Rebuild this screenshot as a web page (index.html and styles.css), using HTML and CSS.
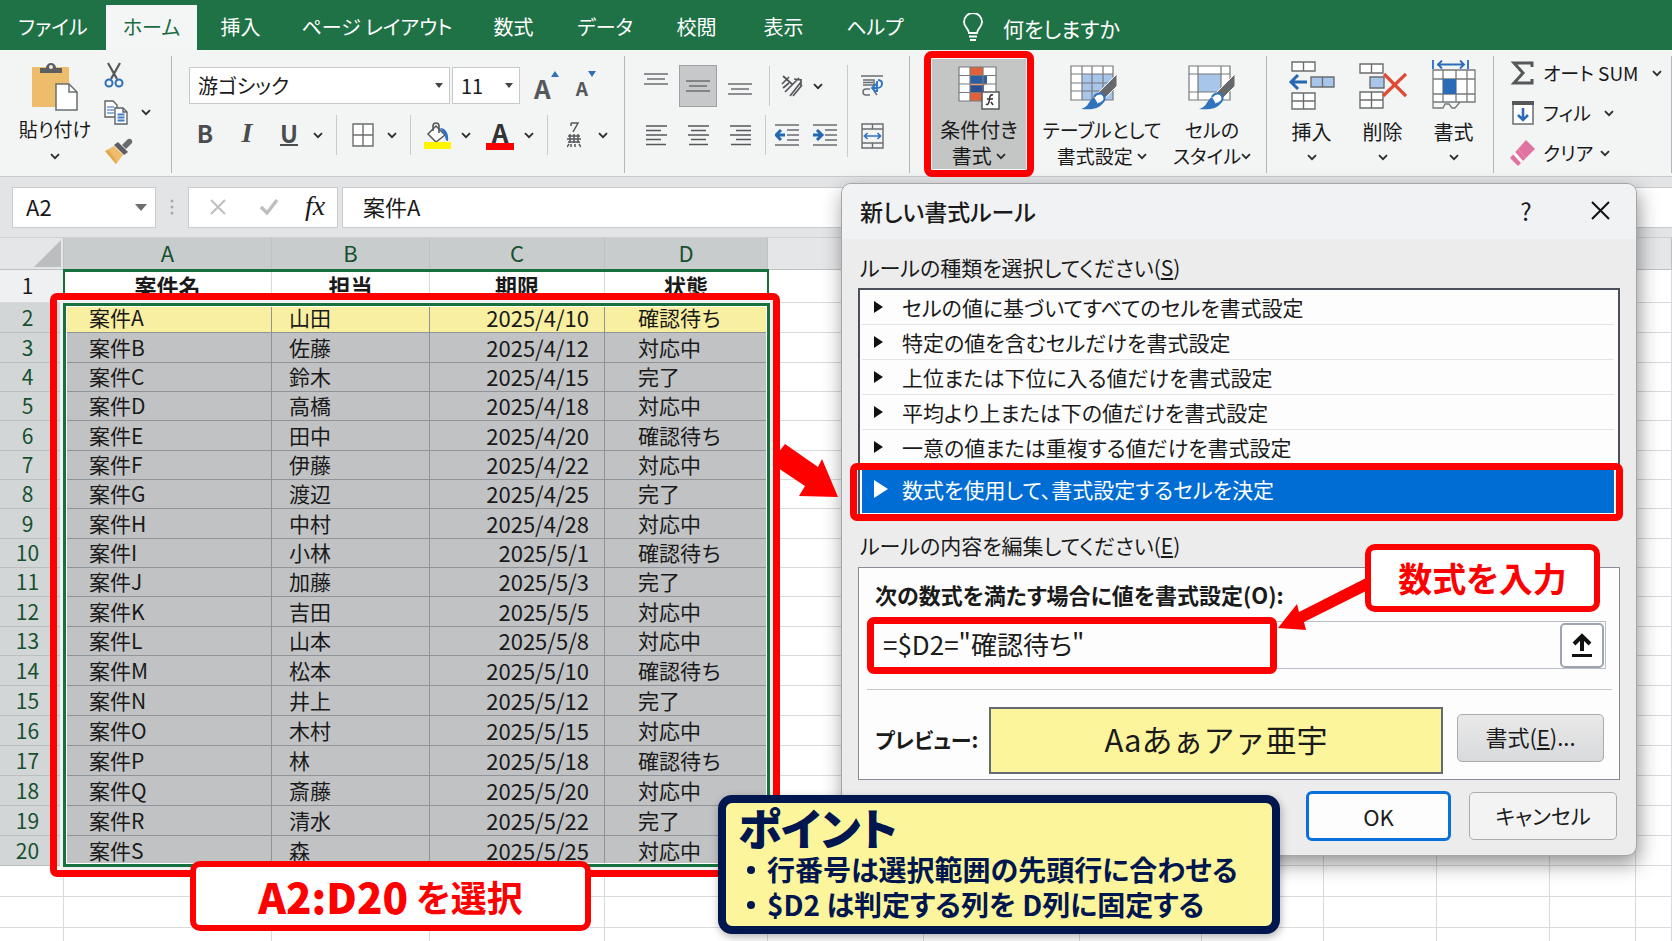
FILE: index.html
```html
<!DOCTYPE html>
<html lang="ja">
<head>
<meta charset="utf-8">
<title>新しい書式ルール</title>
<link rel="stylesheet" href="styles.css">
</head>
<body>
<svg class="defs" aria-hidden="true">
  <symbol id="chev" viewBox="0 0 10 7"><path d="M1 1.200l4 4 4-4" fill="none" stroke="#2b2b2b" stroke-width="1.800"/></symbol>
</svg>
<div class="app">
  <nav class="tabs">
    <a class="tab file" href="#file">ファイル</a>
    <a class="tab active" href="#home">ホーム</a>
    <a class="tab" href="#insert">挿入</a>
    <a class="tab long" href="#layout">ページ レイアウト</a>
    <a class="tab" href="#formula">数式</a>
    <a class="tab mid" href="#data">データ</a>
    <a class="tab" href="#review">校閲</a>
    <a class="tab" href="#view">表示</a>
    <a class="tab mid" href="#help">ヘルプ</a>
    <a class="tell" href="#tell">
      <svg width="20" height="29" viewBox="0 0 20 29" fill="none" stroke="#fff" stroke-width="1.800"><path d="M6 20c0-4-5-6-5-11a9 9 0 0 1 18 0c0 5-5 7-5 11z"/><path d="M6 23.500h8M7 27h6"/></svg>
      何をしますか
    </a>
  </nav>

  <section class="ribbon">
    <div class="group clip">
      <button class="big paste">
        <svg width="46" height="49" viewBox="0 0 46 49"><rect x="0" y="5" width="37" height="40" rx="1" fill="#edbd6c"/><path d="M8 11V6h6a5 5 0 0 1 10 0h6v5z" fill="#5c5e60"/><circle cx="19" cy="5" r="2" fill="#eee"/><path d="M24 22h13l8 8v18H24z" fill="#fff" stroke="#6b6d70" stroke-width="1.500"/><path d="M37 22v8h8" fill="none" stroke="#6b6d70" stroke-width="1.500"/></svg>
        <span>貼り付け</span>
        <svg class="chev"><use href="#chev"/></svg>
      </button>
      <div class="clip-col">
        <button class="ico" aria-label="切り取り"><svg width="20" height="26" viewBox="0 0 20 26" fill="none"><path d="M4 1l9 16M16 1L7 17" stroke="#55585b" stroke-width="2.200"/><circle cx="5" cy="21" r="3.500" stroke="#2f6fb8" stroke-width="2"/><circle cx="15" cy="21" r="3.500" stroke="#2f6fb8" stroke-width="2"/></svg></button>
        <div class="split">
          <button class="ico" aria-label="コピー"><svg width="24" height="25" viewBox="0 0 24 25" stroke="#5f6266" stroke-width="1.400"><path d="M1 1h8l4 4v12H1z" fill="#fff"/><path d="M3 7h7M3 10h7M3 13h7" stroke="#6c9bd2"/><path d="M11 8h8l4 4v12H11z" fill="#fff"/><path d="M19 8v4h4" fill="none"/><path d="M13.500 14.500h7M13.500 17.500h7M13.500 20.500h7" stroke="#3f7ec4" stroke-width="1.800"/></svg></button>
          <button class="drop" aria-label="コピーのオプション"><svg class="chev"><use href="#chev"/></svg></button>
        </div>
        <button class="ico" aria-label="書式のコピー"><svg width="30" height="28" viewBox="0 0 30 28"><path d="M1 14l9-5 9 9-7 9z" fill="#edbd6c"/><path d="M1 14l4-1 8 12-1 2z" fill="#e3a94e"/><path d="M10 8l4-3 10 10-4 3z" fill="#5c5e60"/><path d="M18 8l6-6a3 3 0 0 1 4 4l-6 6z" fill="#6a6c6f"/></svg></button>
      </div>
    </div>

    <div class="group font">
      <div class="row top">
        <label class="combo face"><select aria-label="フォント"><option>游ゴシック</option></select></label>
        <label class="combo size"><select aria-label="フォント サイズ"><option>11</option></select></label>
        <button class="ico grow" aria-label="フォント サイズの拡大"><b>A</b><svg width="8" height="6" viewBox="0 0 8 6"><path d="M0 6l4-6 4 6z" fill="#2f6fb8"/></svg></button>
        <button class="ico shrink" aria-label="フォント サイズの縮小"><b>A</b><svg width="8" height="6" viewBox="0 0 8 6"><path d="M0 0l4 6 4-6z" fill="#2f6fb8"/></svg></button>
      </div>
      <div class="row bottom">
        <button class="ltr b">B</button><button class="ltr i">I</button><button class="ltr u"><span>U</span></button>
        <button class="drop" aria-label="下線の種類"><svg class="chev"><use href="#chev"/></svg></button>
        <i class="sep"></i>
        <div class="split">
          <button class="ico w32" aria-label="罫線"><svg width="22" height="24" viewBox="0 0 22 24"><path d="M1 1h20v22H1zM11 1v22M1 12h20" fill="#fff" stroke="#6b6d70" stroke-width="1.400"/></svg></button>
          <button class="drop" aria-label="罫線の種類"><svg class="chev"><use href="#chev"/></svg></button>
        </div>
        <i class="sep"></i>
        <div class="split">
          <button class="ico w32" aria-label="塗りつぶしの色"><svg width="27" height="27" viewBox="0 0 27 27"><path d="M12 4l9 9-9 7-8-8z" fill="#fff" stroke="#55585b" stroke-width="1.500"/><path d="M9 9V4a3 3 0 0 1 6 0v7" fill="none" stroke="#55585b" stroke-width="1.600"/><path d="M16 6c6 0 9 6 8 13-2 0-3-2-3-6z" fill="#2f74c4"/><rect y="20" width="27" height="7" fill="#fff500"/></svg></button>
          <button class="drop" aria-label="塗りつぶしの色の選択"><svg class="chev"><use href="#chev"/></svg></button>
        </div>
        <div class="split next">
          <button class="ico w32 color" aria-label="フォントの色"><b>A</b><i></i></button>
          <button class="drop" aria-label="フォントの色の選択"><svg class="chev"><use href="#chev"/></svg></button>
        </div>
        <i class="sep"></i>
        <div class="split">
          <button class="ico w32" aria-label="ふりがな"><svg width="14" height="26" viewBox="0 0 14 26" fill="none" stroke="#55585b" stroke-width="1.500"><path d="M4 1h7L6 10M4 1v3"/><path d="M1 14h12M0 17h14M1 20h12M0 25l2-3M4 22v3M8 22v3M12 22l2 3M3 12v9M7 12v9M11 12v9"/></svg></button>
          <button class="drop" aria-label="ふりがなのオプション"><svg class="chev"><use href="#chev"/></svg></button>
        </div>
      </div>
    </div>

    <div class="group align">
      <div class="align-main">
        <div class="row top">
          <button class="ico al" aria-label="上揃え"><svg class="up" width="24" height="12" viewBox="0 0 24 12"><path d="M0 1h24M3 6h18M0 11h24" stroke="#6b6d70" stroke-width="1.600"/></svg></button>
          <button class="ico al on" aria-label="上下中央揃え"><svg width="24" height="12" viewBox="0 0 24 12"><path d="M0 1h24M3 6h18M0 11h24" stroke="#6b6d70" stroke-width="1.600"/></svg></button>
          <button class="ico al" aria-label="下揃え"><svg class="down" width="24" height="12" viewBox="0 0 24 12"><path d="M0 1h24M3 6h18M0 11h24" stroke="#6b6d70" stroke-width="1.600"/></svg></button>
          <i class="sep tight"></i>
          <button class="ico w32" aria-label="方向"><svg width="22" height="24" viewBox="0 0 22 24" fill="none" stroke="#55585b" stroke-width="1.700"><path d="M2 2l10 9M1 10l7-7M2 14l6-5M4 18l14-14M9 22L20 8M12 22l9-11M20 5v7M13 5l7 1"/></svg></button>
          <button class="drop" aria-label="方向の選択"><svg class="chev"><use href="#chev"/></svg></button>
        </div>
        <div class="row bottom">
          <button class="ico al" aria-label="左揃え"><svg width="21" height="21" viewBox="0 0 21 21"><path d="M0 1h21M0 5.500h15M0 10h21M0 14.500h15M0 19.500h20" stroke="#55585b" stroke-width="1.600"/></svg></button>
          <button class="ico al" aria-label="中央揃え"><svg width="21" height="21" viewBox="0 0 21 21"><path d="M0 1h21M3 5.500h15M0 10h21M3 14.500h15M1 19.500h19" stroke="#55585b" stroke-width="1.600"/></svg></button>
          <button class="ico al" aria-label="右揃え"><svg width="21" height="21" viewBox="0 0 21 21"><path d="M0 1h21M6 5.500h15M0 10h21M6 14.500h15M1 19.500h20" stroke="#55585b" stroke-width="1.600"/></svg></button>
          <i class="sep tight"></i>
          <button class="ico al" aria-label="インデントを減らす"><svg width="24" height="22" viewBox="0 0 24 22"><path d="M0 1h24M12 6h12M12 11h12M12 16h12M0 21h24" stroke="#6b6d70" stroke-width="1.500"/><path d="M10 11H2M6 6l-5 5 5 5" fill="none" stroke="#2467b3" stroke-width="3"/></svg></button>
          <button class="ico al" aria-label="インデントを増やす"><svg width="24" height="22" viewBox="0 0 24 22"><path d="M0 1h24M12 6h12M12 11h12M12 16h12M0 21h24" stroke="#6b6d70" stroke-width="1.500"/><path d="M0 11h8M4 6l5 5-5 5" fill="none" stroke="#2467b3" stroke-width="3"/></svg></button>
        </div>
      </div>
      <div class="align-side">
        <button class="ico al" aria-label="折り返して全体を表示する"><svg width="23" height="22" viewBox="0 0 23 22" fill="none" stroke="#6b6d70" stroke-width="1.500"><path d="M0 1h22M2 5h11v5H2M2 7.500h10M9 14H5a3 3 0 0 0 0 6h4M13 16l3 4"/><path d="M17 5c6 0 5 8-1 8h-4M15 9l-4 4 4 4M16 6v11" stroke="#2f74c4" stroke-width="1.900"/></svg></button>
        <button class="ico al" aria-label="セルを結合して中央揃え"><svg width="23" height="26" viewBox="0 0 23 26" fill="none" stroke="#6b6d70" stroke-width="1.400"><path d="M1 1h21v24H1zM1 6h21M1 20h21M11.500 1v5M11.500 20v5"/><path d="M4 13h15M6.500 10l-3 3 3 3M16.500 10l3 3-3 3" stroke="#2f74c4" stroke-width="1.700"/></svg></button>
      </div>
    </div>

    <div class="group styles">
      <button class="big hot">
        <svg width="42" height="44" viewBox="0 0 42 44"><rect x="1" y="1" width="37" height="34" fill="#fff"/><rect x="12" y="1" width="13" height="34" fill="#e0623c"/><rect x="12" y="10" width="17" height="8" fill="#2c5f9f"/><rect x="12" y="19" width="14" height="7" fill="#2c4f8f"/><path d="M12 18.500h16" stroke="#f0a070" stroke-width="1.500"/><path d="M1 1h37v34H1zM12 1v34M25 1v34M1 9.500h37M1 18h11M25 18h13M1 26.500h37" fill="none" stroke="#77797c" stroke-width="1.200"/><rect x="24" y="26" width="17" height="17" fill="#fff" stroke="#55585b" stroke-width="1.500"/><path d="M35 29c-4-1-3 4-4 7s-2 3-3 2M29 33h6M33 36l2 3" fill="none" stroke="#333" stroke-width="1.500"/></svg>
        <span>条件付き<br>書式 <svg class="chev"><use href="#chev"/></svg></span>
      </button>
      <button class="big wide">
        <svg width="64" height="46" viewBox="0 0 64 46"><rect x="1" y="2" width="42" height="34" fill="#fff"/><rect x="12" y="10" width="31" height="26" fill="#a8c6ea"/><path d="M1 2h42v34H1zM12 2v34M22 2v34M33 2v34M1 10h42M1 19h42M1 27h42" fill="none" stroke="#77797c" stroke-width="1.200"/><path d="M47 10v12L35 34l-7-5z" fill="#66686b" stroke="#f3f3f3"/><path d="M11 45c8-2 7-8 13-12l9 6c-4 6-12 7-22 6z" fill="#3173bd"/><path d="M24 33c2-4 8-5 10-1s-2 8-6 8" fill="#fff" stroke="#3173bd" stroke-width="2"/></svg>
        <span>テーブルとして<br>書式設定 <svg class="chev"><use href="#chev"/></svg></span>
      </button>
      <button class="big">
        <svg width="48" height="46" viewBox="0 0 48 46"><rect x="1" y="2" width="41" height="34" fill="#fff"/><rect x="10" y="10" width="23" height="18" fill="#a8c6ea"/><path d="M1 2h41v34H1zM10 2v34M33 2v34M1 10h41M1 28h41" fill="none" stroke="#77797c" stroke-width="1.200"/><path d="M47 10v12L35 34l-7-5z" fill="#66686b" stroke="#f3f3f3"/><path d="M11 45c8-2 7-8 13-12l9 6c-4 6-12 7-22 6z" fill="#3173bd"/><path d="M24 33c2-4 8-5 10-1s-2 8-6 8" fill="#fff" stroke="#3173bd" stroke-width="2"/></svg>
        <span>セルの<br>スタイル<svg class="chev"><use href="#chev"/></svg></span>
      </button>
    </div>

    <div class="group cells">
      <button class="big">
        <svg width="48" height="50" viewBox="0 0 48 50"><g fill="#fff" stroke="#6b6d70" stroke-width="1.400"><path d="M4 2h23v9H4zM15.500 2v9M4 33h23v16H4zM15.500 33v16M4 41h23"/><path d="M23 17h23v10H23zM34.500 17v10" fill="#a8c6ea"/></g><path d="M19 22H3M10 15l-7 7 7 7" fill="none" stroke="#2467b3" stroke-width="3"/></svg>
        <span>挿入</span><svg class="chev"><use href="#chev"/></svg>
      </button>
      <button class="big">
        <svg width="48" height="50" viewBox="0 0 48 50"><g fill="#fff" stroke="#6b6d70" stroke-width="1.400"><path d="M1 4h23v9H1zM12.500 4v9M1 32h23v16H1zM12.500 32v16M1 40h23"/><path d="M11 17h14v11H11z" fill="#a8c6ea"/></g><path d="M25 14l22 22" stroke="#e04a32" stroke-width="3.200"/><path d="M47 14L24 36" stroke="#e04a32" stroke-width="3.200"/></svg>
        <span>削除</span><svg class="chev"><use href="#chev"/></svg>
      </button>
      <button class="big">
        <svg width="44" height="50" viewBox="0 0 44 50"><path d="M1 10h42v32H1z" fill="#fff"/><path d="M1 10h42v32H1zM11 10v32M24 10v32M35 10v32M1 19h42M1 34h42M1 42v6h10l2-4h4l3 4h3l5-6" fill="none" stroke="#77797c" stroke-width="1.300"/><rect x="11" y="19" width="13" height="15" fill="#2b6cb8"/><path d="M1 0v9M36 0v9M5 4.500h27M10 .500l-4 4 4 4M28 .500l4 4-4 4" fill="none" stroke="#2b6cb8" stroke-width="1.800"/></svg>
        <span>書式</span><svg class="chev"><use href="#chev"/></svg>
      </button>
    </div>

    <div class="group edit">
      <button class="line"><svg width="26" height="24" viewBox="0 0 26 24"><path d="M22 6V2H4l9 10-9 10h18v-4" fill="none" stroke="#55585b" stroke-width="3"/></svg>オート SUM<svg class="chev far"><use href="#chev"/></svg></button>
      <button class="line"><svg width="26" height="24" viewBox="0 0 26 24"><path d="M3 1h20v22H3z" fill="#fff" stroke="#6b6d70" stroke-width="1.500"/><path d="M2 0h22v4H2z" fill="#55585b"/><path d="M13 7v12M8 14l5 5 5-5" fill="none" stroke="#2b6cb8" stroke-width="2.600"/></svg>フィル<svg class="chev far"><use href="#chev"/></svg></button>
      <button class="line"><svg width="26" height="26" viewBox="0 0 26 26"><path d="M16 0l9 9-9 9-8-9z" fill="#e0739f"/><path d="M8 9l8 9-8 8-8-8z" fill="#e0739f"/><path d="M4 13l8 9" stroke="#fff" stroke-width="3"/></svg>クリア<svg class="chev"><use href="#chev"/></svg></button>
    </div>
  </section>

  <section class="fbar">
    <div class="namebox"><input type="text" value="A2" aria-label="名前ボックス"><button class="tri" aria-label="名前の一覧"></button></div>
    <svg class="dots" width="4" height="16" viewBox="0 0 4 16"><g fill="#a9a9ab"><circle cx="2" cy="2" r="1.500"/><circle cx="2" cy="8" r="1.500"/><circle cx="2" cy="14" r="1.500"/></g></svg>
    <div class="fx">
      <button aria-label="キャンセル"><svg width="18" height="18" viewBox="0 0 18 18"><path d="M2 2l14 14M16 2L2 16" stroke="#bdbec0" stroke-width="2"/></svg></button>
      <button aria-label="入力"><svg width="20" height="18" viewBox="0 0 20 18"><path d="M2 9l6 6L18 2" fill="none" stroke="#bdbec0" stroke-width="3.400"/></svg></button>
      <button class="fn" aria-label="関数の挿入">fx</button>
    </div>
    <input class="formula" type="text" value="案件A" aria-label="数式バー">
  </section>

  <main class="sheet">
    <table>
      <colgroup><col class="ch"><col class="ca"><col class="cb"><col class="cc"><col class="cd"><col class="ce"><col class="ce"><col class="cf"><col class="cf"><col class="cg"><col class="cg"><col class="ci"><col></colgroup>
      <thead><tr><th class="corner"><svg width="27" height="27" viewBox="0 0 27 27"><path d="M27 0v27H0z" fill="#bcbdbf"/></svg></th><th class="s">A</th><th class="s">B</th><th class="s">C</th><th class="s">D</th><th colspan="8"></th></tr></thead>
      <tbody id="rows"></tbody>
    </table>
    <div class="head-frame"></div>
    <div class="sel-frame"></div>
    <div class="red-frame"></div>
  </main>

  <svg class="arrow-a" width="60" height="56" viewBox="0 0 60 56"><path d="M7 1l33 23 4-8 16 38-39-1 6-10L0 25V10z" fill="#fe0000"/></svg>

  <section class="dialog" role="dialog" aria-labelledby="dlg-title">
    <header class="dlg-head">
      <h2 id="dlg-title">新しい書式ルール</h2>
      <button class="help" aria-label="ヘルプ">?</button>
      <button class="close" aria-label="閉じる"><svg width="19" height="19" viewBox="0 0 19 19"><path d="M1 1l17 17M18 1L1 18" stroke="#111" stroke-width="2"/></svg></button>
    </header>
    <div class="dlg-body">
      <p class="lbl" id="kind">ルールの種類を選択してください(<u>S</u>)</p>
      <div class="list-wrap">
        <ul class="list" role="listbox" aria-labelledby="kind">
          <li role="option">セルの値に基づいてすべてのセルを書式設定</li>
          <li role="option">特定の値を含むセルだけを書式設定</li>
          <li role="option">上位または下位に入る値だけを書式設定</li>
          <li role="option">平均より上または下の値だけを書式設定</li>
          <li role="option">一意の値または重複する値だけを書式設定</li>
          <li role="option" class="picked" aria-selected="true">数式を使用して、書式設定するセルを決定</li>
        </ul>
        <div class="pick-frame"></div>
      </div>
      <p class="lbl">ルールの内容を編集してください(<u>E</u>)</p>
      <div class="box">
        <label class="strong" for="expr">次の数式を満たす場合に値を書式設定(O):</label>
        <div class="expr">
          <input id="expr" type="text" value='=$D2="確認待ち"'>
          <button aria-label="ダイアログを折りたたむ"><svg width="20" height="24" viewBox="0 0 20 24"><path d="M10 18V4M2 11l8-8 8 8" fill="none" stroke="#111" stroke-width="4"/><path d="M0 22.500h20" stroke="#111" stroke-width="3"/></svg></button>
          <div class="expr-frame"></div>
        </div>
        <hr>
        <div class="preview">
          <span class="strong">プレビュー:</span>
          <output>Aaあぁアァ亜宇</output>
          <button class="fmt">書式(<u>E</u>)...</button>
        </div>
      </div>
      <footer><button class="ok">OK</button><button class="cancel">キャンセル</button></footer>
    </div>
    <svg class="arrow-b" width="92" height="56" viewBox="0 0 92 56"><path d="M0 52l19-24 2 8L92 0v13L26 46l2 8z" fill="#fe0000"/></svg>
    <div class="tag tag-b">数式を入力</div>
  </section>

  <div class="tag tag-a"><b>A2:D20</b> を選択</div>

  <aside class="note">
    <h3>ポイント</h3>
    <ul>
      <li>行番号は選択範囲の先頭行に合わせる</li>
      <li>$D2 は判定する列を D列に固定する</li>
    </ul>
  </aside>
</div>
<script src="sheet.js"></script>
</body>
</html>
```
FILE: sheet.js
```js
const data = [
  ["案件A", "山田", "2025/4/10", "確認待ち"],
  ["案件B", "佐藤", "2025/4/12", "対応中"],
  ["案件C", "鈴木", "2025/4/15", "完了"],
  ["案件D", "高橋", "2025/4/18", "対応中"],
  ["案件E", "田中", "2025/4/20", "確認待ち"],
  ["案件F", "伊藤", "2025/4/22", "対応中"],
  ["案件G", "渡辺", "2025/4/25", "完了"],
  ["案件H", "中村", "2025/4/28", "対応中"],
  ["案件I", "小林", "2025/5/1", "確認待ち"],
  ["案件J", "加藤", "2025/5/3", "完了"],
  ["案件K", "吉田", "2025/5/5", "対応中"],
  ["案件L", "山本", "2025/5/8", "対応中"],
  ["案件M", "松本", "2025/5/10", "確認待ち"],
  ["案件N", "井上", "2025/5/12", "完了"],
  ["案件O", "木村", "2025/5/15", "対応中"],
  ["案件P", "林", "2025/5/18", "確認待ち"],
  ["案件Q", "斎藤", "2025/5/20", "対応中"],
  ["案件R", "清水", "2025/5/22", "完了"],
  ["案件S", "森", "2025/5/25", "対応中"]
];
const body = document.getElementById("rows");
const blanks = "<td></td>".repeat(8);
const row = (cls, head, cells) => {
  const tr = document.createElement("tr");
  tr.className = cls;
  tr.innerHTML = `<th scope="row">${head}</th>` + cells.map(c => `<td>${c}</td>`).join("") + blanks;
  body.append(tr);
};
row("titles", 1, ["案件名", "担当", "期限", "状態"]);
data.forEach((r, i) => row(i ? "sel" : "sel hit", i + 2, r));
for (let i = 0; i < 3; i++) row("empty", "", ["", "", "", ""]);
```
FILE: styles.css
```css
* { box-sizing: border-box; }
body, p, h2, h3, ul { margin: 0; padding: 0; }
body {
  font-family: "Noto Sans CJK JP", "Noto Sans", sans-serif;
  font-size: 20px;
  line-height: 26px;
  color: #1a1a1a;
  overflow: hidden;
}
button, input, select { font: inherit; color: inherit; border: 0; background: none; padding: 0; margin: 0; border-radius: 0; }
ul { list-style: none; }
svg { display: block; flex: none; }
.defs { position: absolute; width: 0; height: 0; }
.chev { width: 10px; height: 7px; }

.app { position: relative; height: 100vh; display: flex; flex-direction: column; overflow: hidden; background: #fff; }

/* tab strip */
.tabs { display: flex; align-items: stretch; height: 50px; padding-top: 5px; background: #1f7246; font-feature-settings: "palt"; flex: none; white-space: nowrap; }
.tab { width: 87px; line-height: 43px; color: #fff; text-align: center; text-decoration: none; font-size: 20px; }
.tab.file { width: 106px; }
.tab.mid { width: 96px; }
.tab.long { width: 186px; }
.tab.active { width: 91px; background: #f4f5f5; color: #1b6b42; }
.tell { display: flex; align-items: center; gap: 20px; margin-left: 40px; color: #fff; text-decoration: none; font-size: 21px; }

/* ribbon */
.ribbon { display: flex; height: 127px; flex: none; padding: 6px 0 3px; background: #f3f4f4; border-bottom: 1px solid #c9cacc; font-feature-settings: "palt"; }
.group { border-right: 1px solid #b4b6b8; }
.row { display: flex; align-items: center; }
.ico, .drop { display: flex; align-items: center; justify-content: center; }
.drop { width: 16px; height: 32px; }
.w32 { width: 32px; height: 32px; }
.split { display: flex; align-items: center; gap: 5px; }
.sep { width: 1px; height: 40px; margin: 0 10px; background: #c8cacc; }
.sep.tight { margin: 0 6px; }
.big { display: flex; flex-direction: column; align-items: center; white-space: nowrap; }
.big span { line-height: 26px; text-align: center; }
.big span .chev { display: inline-block; vertical-align: 4px; }

.clip { display: flex; width: 172px; padding: 6px 0 0 18px; gap: 12px; }
.paste { width: 74px; gap: 5px; font-size: 19px; }
.paste .chev { margin-top: 6px; }
.clip-col { display: flex; flex-direction: column; align-items: flex-start; gap: 12px; }
.clip-col .drop { height: 24px; }
.clip-col .split { gap: 10px; }

.font { width: 453px; padding: 11px 0 0 12px; }
.font .top { height: 37px; padding-left: 5px; }
.font .bottom { height: 40px; margin-top: 11px; }
.combo { position: relative; display: flex; height: 37px; background: #fff; border: 1px solid #c6c8ca; }
.combo select { width: 100%; appearance: none; padding-left: 8px; }
.combo::after { content: ""; position: absolute; right: 6px; top: 15px; border: 4px solid transparent; border-top: 5px solid #444; pointer-events: none; }
.face { width: 261px; }
.size { width: 68px; margin-left: 2px; }
.grow, .shrink { align-items: flex-start; color: #55585b; }
.grow { margin-left: 14px; font-size: 26px; }
.shrink { margin-left: 17px; font-size: 19px; }
.grow b, .shrink b { padding-top: 4px; }
.ltr { width: 42px; height: 36px; padding-bottom: 4px; font-size: 24px; color: #4a4c4f; font-weight: bold; }
.ltr.i { font-family: "Liberation Serif", serif; font-style: italic; font-size: 28px; }
.ltr.u span { display: inline-block; line-height: 22px; border-bottom: 2px solid #4a4c4f; }
.color { flex-direction: column; color: #333; }
.color b { font-size: 26px; line-height: 23px; }
.color i { width: 28px; height: 7px; background: #fe0000; }
.next { margin-left: 10px; }

.align { display: flex; width: 285px; padding: 9px 0 0 12px; }
.align-main { width: 210px; }
.al { width: 38px; height: 42px; margin-right: 4px; }
.al.on { background: #c6c8c9; border: 1px solid #9fa1a3; }
.align-main .bottom { height: 40px; margin-top: 8px; }
.align-main .bottom .sep + .al, .align-main .bottom .al:last-child { margin-right: 0; }
.align-main .bottom .sep { margin: 0 2px; }
.align .drop { width: 20px; }
.up { margin-bottom: 14px; }
.down { margin-top: 6px; }
.align-side { height: 92px; padding-left: 5px; border-left: 1px solid #c8cacc; display: flex; flex-direction: column; gap: 8px; }
.align-side .al { margin: 0; }

.styles { display: flex; width: 357px; padding: 0 0 0 14px; gap: 5px; }
.styles .big { width: 84px; padding-top: 8px; gap: 7px; font-size: 19px; }
.styles .big.wide { width: 126px; }
.styles .big.hot { width: 110px; height: 126px; margin-top: -5px; padding-top: 8px; background: #c4c6c6; border: 7px solid #fe0000; border-radius: 8px; box-shadow: inset 0 0 0 1px #fff; font-size: 20px; }
.cells { display: flex; width: 227px; padding: 4px 0 0 9px; }
.cells .big { width: 71px; gap: 9px; }
.edit { flex: 1; display: flex; flex-direction: column; align-items: flex-start; padding: 4px 0 0 16px; gap: 14px; font-size: 19px; }
.line { display: flex; align-items: center; gap: 7px; height: 26px; white-space: nowrap; }
.line .far { margin-left: 6px; }

/* formula bar */
.fbar { display: flex; align-items: center; height: 61px; flex: none; padding-left: 12px; background: #e3e4e6; border-bottom: 1px solid #cfd0d2; font-size: 22px; }
.namebox, .fx, .formula { height: 41px; background: #fff; border: 1px solid #c9cbcd; }
.namebox { display: flex; align-items: center; width: 144px; }
.namebox input { flex: 1; min-width: 0; padding: 0 0 3px 13px; }
.tri { width: 28px; height: 30px; display: grid; place-items: center; }
.tri::before { content: ""; border: 6px solid transparent; border-top: 7px solid #6b6d70; border-bottom: 0; }
.dots { margin: 0 14px; }
.fx { display: flex; align-items: center; width: 150px; padding-left: 16px; }
.fx button { width: 50px; height: 36px; display: grid; place-items: center; justify-content: start; padding-left: 4px; }
.fx .fn { font-family: "Liberation Serif", serif; font-style: italic; font-size: 28px; width: 30px; padding: 0 0 3px; }
.formula { flex: 1; min-width: 0; margin-left: 4px; padding: 0 0 3px 20px; border-right: 0; }

/* worksheet */
.sheet { position: relative; }
table { width: 100%; table-layout: fixed; border-collapse: separate; border-spacing: 0; font-size: 21px; line-height: 24px; }
.ch { width: 64px; } .ca { width: 208px; } .cb { width: 158px; } .cc { width: 175px; } .cd { width: 163px; }
.ce { width: 156px; } .cf { width: 122px; } .cg { width: 113px; } .ci { width: 86px; }
th, td { padding: 0 0 2px; border: 0 solid #d9dadc; border-width: 0 1px 1px 0; text-align: left; font-weight: normal; white-space: nowrap; height: 30px; }
thead th { height: 32px; padding-bottom: 4px; background: #e5e6e8; border-color: #bfc1c3; text-align: center; font-size: 22px; }
thead .corner { padding: 0; }
thead .s { background: #c9cccd; color: #17502f; }
.corner svg { margin: 0 2px 0 auto; }
tbody th { text-align: center; padding-right: 8px; background: #eff0f1; }
.titles td { height: 33px; text-align: center; font-weight: bold; font-size: 22px; }
.sel th { background: #d2d6d6; color: #17502f; border-color: #b9bfbe; }
tbody tr:nth-child(-n+13):not(:nth-child(3n)):not(.titles):not(.hit) > * { height: 29px; }
.sel td:nth-child(-n+5) { background: #c1c2c4; border-color: #909397; }
.hit td:nth-child(-n+5) { background: #f9efa0; }
.sel td:nth-child(2) { padding-left: 25px; }
.sel td:nth-child(3) { padding-left: 17px; }
.sel td:nth-child(4) { text-align: right; padding-right: 15px; font-size: 22px; }
.sel td:nth-child(5) { padding-left: 33px; }
.empty > * { height: 31px; }
.empty th { background: #fff; }
.head-frame { position: absolute; left: 63px; top: 31px; width: 706px; height: 34px; border: 2px solid #16713f; border-top-width: 3px; border-bottom: 0; }
.sel-frame { position: absolute; left: 63px; top: 65px; width: 707px; height: 564px; border: 3px solid #16713f; box-shadow: inset 0 0 0 1px #fff, 0 0 0 3px #f1f3f2; }
.red-frame { position: absolute; left: 50px; top: 55px; width: 730px; height: 584px; border: 7px solid #fe0000; border-radius: 7px; }
.arrow-a { position: absolute; left: 778px; top: 443px; z-index: 3; }

/* dialog window */
.dialog { position: absolute; left: 841px; top: 183px; width: 796px; border: 1px solid #a3a5a8; border-radius: 10px; background: #ececed; box-shadow: 2px 8px 20px rgba(0, 0, 0, .42); font-size: 21px; font-feature-settings: "palt"; z-index: 2; }
.dlg-head { display: flex; align-items: center; height: 55px; padding: 0 26px 2px 18px; background: #f1f2f4; border-radius: 9px 9px 0 0; }
.dlg-head h2 { flex: 1; font-size: 23px; font-weight: 500; }
.dlg-head button { display: grid; place-items: center; height: 32px; }
.help { width: 32px; margin-right: 49px; font-size: 24px; }
.dlg-body { padding: 12px 16px 14px; }
.lbl { line-height: 32px; padding-left: 2px; }
.list-wrap { position: relative; margin: 5px 0 12px; }
.list { border: 2px solid #4a4f5a; background: #fdfdfd; padding: 0 4px 2px 2px; }
.list li { display: flex; align-items: center; gap: 18px; height: 35px; padding-left: 12px; border-bottom: 1px solid #e3e4e8; }
.list li::before { content: ""; border: 6px solid transparent; border-left: 9px solid #111; border-right: 0; margin-right: 1px; }
.list .picked { height: 48px; background: #006dd5; color: #fff; border: 0; gap: 14px; }
.list .picked::before { border-width: 9px 0 9px 14px; border-left-color: #fff; margin: 0; }
.pick-frame { position: absolute; left: -8px; right: -3px; bottom: -4px; height: 58px; border: 7px solid #fe0000; border-radius: 7px; }
.box { margin-top: 6px; padding: 10px 7px 5px 8px; background: #fdfdfd; border: 1px solid #868a94; }
.strong { display: block; padding-left: 8px; line-height: 32px; font-weight: bold; font-size: 22px; }
.expr { position: relative; display: flex; align-items: center; height: 48px; margin: 11px 6px 20px 0; padding-right: 1px; background: #fdfdfe; border: 1px solid #b9bdc6; }
.expr input { flex: 1; min-width: 0; padding: 0 0 3px 15px; font-size: 26px; }
.expr button { display: grid; place-items: center; width: 44px; height: 45px; border: 2px solid #9ea4b0; border-radius: 5px; background: #fff; }
.expr-frame { position: absolute; left: -1px; top: -5px; width: 410px; height: 57px; border: 7px solid #fe0000; border-radius: 7px; pointer-events: none; }
hr { margin: 0; border: 0; border-top: 1px solid #c6c8cc; }
.preview { display: flex; align-items: center; margin-top: 17px; padding-right: 8px; }
.preview .strong { width: 122px; flex: none; font-size: 21px; padding-bottom: 4px; }
.preview output { flex: 1; height: 67px; line-height: 60px; border: 2px solid #666a73; background: #fdf59c; text-align: center; font-size: 31px; font-feature-settings: normal; }
.fmt { width: 147px; height: 48px; margin: 0 0 6px 14px; padding-bottom: 4px; border: 1px solid #a9abae; border-radius: 5px; background: linear-gradient(#e9e9ea, #d9dadb); font-size: 22px; }
footer { display: flex; justify-content: flex-end; align-items: center; gap: 18px; margin-top: 11px; padding-right: 3px; }
.ok { width: 145px; height: 50px; border: 3px solid #0a70dc; border-radius: 6px; background: #fdfdfd; font-size: 22px; }
.cancel { width: 148px; height: 48px; padding-bottom: 2px; border: 1px solid #a9abae; border-radius: 5px; background: #f3f3f4; }
.arrow-b { position: absolute; left: 436px; top: 392px; }

/* callouts */
.tag { position: absolute; display: flex; align-items: center; justify-content: center; background: #fff; border: 6px solid #fe0000; border-radius: 10px; color: #fe0000; font-weight: bold; font-size: 35px; font-feature-settings: "palt"; white-space: pre; }
.tag-a { left: 190px; top: 861px; width: 401px; height: 70px; z-index: 4; font-size: 36px; }
.tag-a b { font-size: 42px; }
.tag-b { right: 36px; top: 360px; width: 235px; height: 68px; font-size: 34px; }
.note { position: absolute; left: 718px; top: 795px; width: 562px; height: 139px; padding: 4px 12px; border: 8px solid #00164f; border-radius: 14px; background: #fdf59c; color: #00164f; font-weight: bold; font-feature-settings: "palt"; z-index: 5; box-shadow: 1px 3px 8px rgba(0, 0, 0, .3); }
.note h3 { margin-bottom: 5px; font-size: 44px; line-height: 40px; font-weight: 900; }
.note li { display: flex; align-items: center; gap: 12px; font-size: 28px; line-height: 35px; padding-left: 9px; white-space: nowrap; }
.note li::before { content: ""; width: 8px; height: 8px; border-radius: 50%; background: #00164f; }
```
